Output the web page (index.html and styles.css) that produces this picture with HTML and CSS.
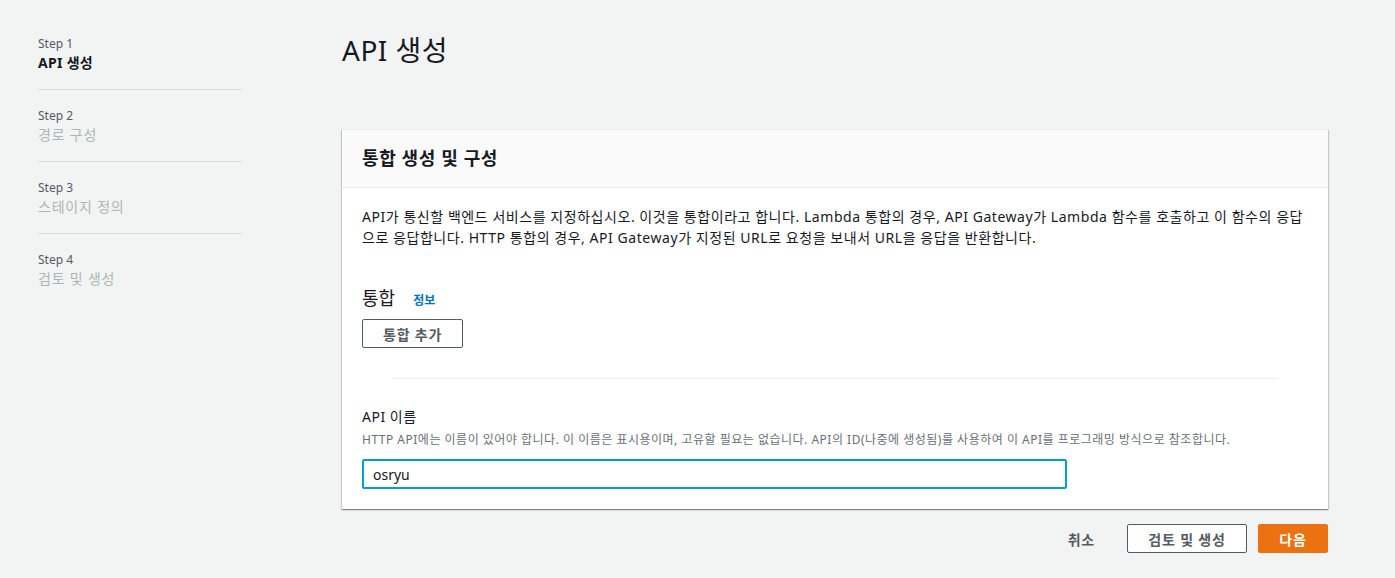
FILE: index.html
```html
<!DOCTYPE html>
<html lang="ko">
<head>
    <meta charset="UTF-8">
    <meta name="viewport" content="width=device-width, initial-scale=1.0">
    <title>API 생성</title>
    <link rel="stylesheet" href="styles.css">
</head>
<body>
    <div class="layout">
        <nav class="steps">
            <div class="step">
                <div class="step-label">Step 1</div>
                <div class="step-title active">API 생성</div>
            </div>
            <div class="step">
                <div class="step-label">Step 2</div>
                <div class="step-title">경로 구성</div>
            </div>
            <div class="step">
                <div class="step-label">Step 3</div>
                <div class="step-title">스테이지 정의</div>
            </div>
            <div class="step last">
                <div class="step-label">Step 4</div>
                <div class="step-title">검토 및 생성</div>
            </div>
        </nav>

        <main class="content">
            <h1 class="page-title">API 생성</h1>

            <section class="card">
                <div class="card-header">통합 생성 및 구성</div>
                <div class="card-body">
                    <p class="intro">API가 통신할 백엔드 서비스를 지정하십시오. 이것을 통합이라고 합니다. Lambda 통합의 경우, API Gateway가 Lambda 함수를 호출하고 이 함수의 응답으로 응답합니다. HTTP 통합의 경우, API Gateway가 지정된 URL로 요청을 보내서 URL을 응답을 반환합니다.</p>

                    <div class="section-head">
                        <h2>통합</h2>
                        <a href="#" class="info-link">정보</a>
                    </div>
                    <button class="btn" type="button">통합 추가</button>

                    <hr class="divider">

                    <div class="field">
                        <label for="api-name">API 이름</label>
                        <div class="hint">HTTP API에는 이름이 있어야 합니다. 이 이름은 표시용이며, 고유할 필요는 없습니다. API의 ID(나중에 생성됨)를 사용하여 이 API를 프로그래밍 방식으로 참조합니다.</div>
                        <input type="text" id="api-name" class="text-input" value="osryu">
                    </div>
                </div>
            </section>

            <div class="actions">
                <a href="#" class="cancel">취소</a>
                <button class="btn wide" type="button">검토 및 생성</button>
                <button class="btn primary" type="button">다음</button>
            </div>
        </main>
    </div>
</body>
</html>
```

FILE: styles.css
```css
body {
    font-family: "Noto Sans", "Noto Sans CJK KR", sans-serif;
    background-color: #f2f3f3;
    color: #16191f;
    margin: 0;
    padding: 0;
}
.layout {
    display: flex;
    align-items: flex-start;
}
.steps {
    width: 204px;
    margin-left: 38px;
    padding-top: 18px;
    margin-right: 100px;
}
.step {
    padding: 18px 0 15px;
    border-bottom: 1px solid #d5dbdb;
}
.step.last {
    border-bottom: none;
}
.step-label {
    font-size: 12px;
    line-height: 16px;
    color: #545b64;
}
.step-title {
    font-size: 14px;
    line-height: 22px;
    color: #aab7b8;
    letter-spacing: 0.8px;
}
.step-title.active {
    color: #16191f;
    font-weight: bold;
    letter-spacing: 0.3px;
}
.content {
    width: 986px;
    padding-top: 32px;
}
.page-title {
    font-size: 28px;
    font-weight: normal;
    line-height: 36px;
    margin: 0 0 61px;
    letter-spacing: 0.5px;
}
.card {
    background: white;
    box-shadow: 0 1px 1px 0 rgba(0, 28, 36, 0.3), 1px 1px 1px 0 rgba(0, 28, 36, 0.15), -1px 1px 1px 0 rgba(0, 28, 36, 0.15);
    border-top: 1px solid #eaeded;
}
.card-header {
    background-color: #fafafa;
    border-bottom: 1px solid #eaeded;
    font-size: 18px;
    font-weight: bold;
    line-height: 57px;
    padding: 0 20px;
    letter-spacing: 0.6px;
}
.card-body {
    padding: 18px 20px 20px;
}
.intro {
    font-size: 14px;
    line-height: 21px;
    margin: 0;
    letter-spacing: 0.55px;
}
.section-head {
    display: flex;
    align-items: baseline;
    gap: 18px;
    margin-top: 38px;
    margin-bottom: 9px;
}
.section-head h2 {
    font-size: 18px;
    font-weight: normal;
    line-height: 24px;
    margin: 0;
}
.info-link {
    color: #0073bb;
    font-size: 12px;
    font-weight: bold;
    text-decoration: none;
}
.btn {
    font-family: inherit;
    font-size: 14px;
    font-weight: bold;
    color: #545b64;
    background: white;
    border: 1px solid #545b64;
    border-radius: 2px;
    height: 29px;
    padding: 0 20px;
    letter-spacing: 0.8px;
    cursor: pointer;
}
.divider {
    border: none;
    border-top: 1px solid #eaeded;
    margin: 30px 30px 28px;
}
.field label {
    display: block;
    font-size: 14px;
    line-height: 20px;
    letter-spacing: 0.5px;
}
.hint {
    font-size: 12px;
    line-height: 18px;
    color: #687078;
    margin-top: 4px;
    margin-bottom: 10px;
    letter-spacing: 0.5px;
}
.text-input {
    box-sizing: border-box;
    width: 705px;
    height: 30px;
    border: 2px solid #00a1c9;
    border-radius: 2px;
    padding: 0 9px;
    font-family: inherit;
    font-size: 14px;
    color: #16191f;
    outline: none;
}
.actions {
    display: flex;
    justify-content: flex-end;
    align-items: center;
    gap: 11px;
    margin-top: 15px;
}
.cancel {
    color: #545b64;
    font-size: 14px;
    font-weight: bold;
    text-decoration: none;
    margin-right: 21px;
    letter-spacing: 0.8px;
}
.btn.wide {
    width: 120px;
    padding: 0;
}
.btn.primary {
    background-color: #ec7211;
    border-color: #ec7211;
    color: white;
    width: 70px;
    padding: 0;
}
```
